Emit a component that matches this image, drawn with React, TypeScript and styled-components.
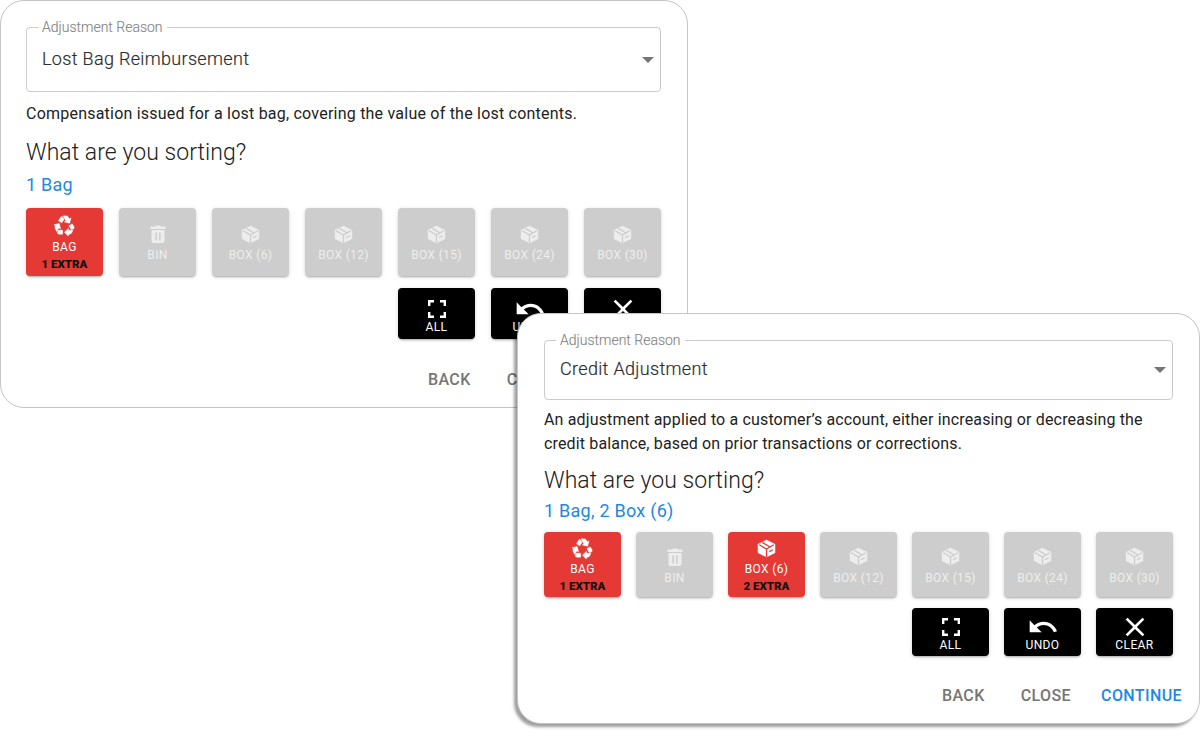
import React from "react";
import styled, { createGlobalStyle } from "styled-components";
import { MdRecycling, MdUndo, MdClose } from "react-icons/md";

const Global = createGlobalStyle`
  html, body { margin: 0; padding: 0; background: #fff; }
  body { font-family: Roboto, "Liberation Sans", sans-serif; width: 1200px; height: 750px; overflow: hidden; }
`;

const Stage = styled.div`
  position: relative;
  width: 1200px;
  height: 750px;
  overflow: hidden;
`;

const Card = styled.div<{ $front?: boolean }>`
  position: absolute;
  box-sizing: border-box;
  background: #fff;
  display: flex;
  flex-direction: column;
  border: 1px solid #c4c4c4;
  ${(p) =>
    p.$front
      ? `left: 517px; top: 313px; width: 683px; height: 411px; border-radius: 24px; padding: 26px 26px 0 26px;
         box-shadow: -3px 3px 3px rgba(0,0,0,.38);`
      : `left: 0; top: 0; width: 688px; height: 408px; border-radius: 24px; padding: 26px 26px 0 25px;`}
`;

const Field = styled.div<{ $h: number }>`
  position: relative;
  box-sizing: border-box;
  height: ${(p) => p.$h}px;
  border: 1px solid #cbcbcb;
  border-radius: 4px;
  display: flex;
  align-items: center;
  padding: 0 15px 3px;
  flex: none;
`;

const FieldLabel = styled.span`
  position: absolute;
  left: 11px;
  top: -9px;
  padding: 0 4px;
  background: #fff;
  font-size: 14px;
  line-height: 16px;
  color: #858585;
  font-weight: 300;
  -webkit-text-stroke: 0.15px #858585;
`;

const FieldValue = styled.span`
  font-size: 18px;
  letter-spacing: 0.33px;
  color: #2e2e2e;
  font-weight: 300;
  -webkit-text-stroke: 0.2px #2e2e2e;
`;

const Caret = styled.span`
  position: absolute;
  right: 6px;
  top: 50%;
  margin-top: -3px;
  width: 0;
  height: 0;
  border-left: 6px solid transparent;
  border-right: 6px solid transparent;
  border-top: 6px solid #757575;
`;

const Description = styled.p<{ $mt: number; $ls: number }>`
  margin: ${(p) => p.$mt}px 0 0;
  font-size: 16px;
  line-height: 24px;
  letter-spacing: ${(p) => p.$ls}px;
  color: #222;
`;

const Heading = styled.h2<{ $mt: number }>`
  margin: ${(p) => p.$mt}px 0 0;
  font-size: 23px;
  line-height: 30px;
  font-weight: 300;
  letter-spacing: 0.05px;
  color: #222;
`;

const Summary = styled.div<{ $mt: number }>`
  margin-top: ${(p) => p.$mt}px;
  font-size: 18px;
  line-height: 24px;
  letter-spacing: 0.25px;
  color: #1e88e5;
`;

const Row = styled.div<{ $mt: number; $gap: number }>`
  display: flex;
  justify-content: flex-end;
  gap: ${(p) => p.$gap}px;
  margin-top: ${(p) => p.$mt}px;
  flex: none;
`;

const Tile = styled.div<{ $kind: "on" | "off" }>`
  box-sizing: border-box;
  width: 77px;
  flex: none;
  border-radius: 4px;
  display: flex;
  flex-direction: column;
  align-items: center;
  justify-content: center;
  padding-top: 2px;
  font-size: 12px;
  line-height: 15px;
  letter-spacing: 0.35px;
  color: ${(p) => (p.$kind === "off" ? "#ededed" : "#fff")};
  background: ${(p) => (p.$kind === "on" ? "#e53935" : "#cdcdcd")};
  box-shadow: 0 2px 2px -1px rgba(0,0,0,.25), 0 1px 4px rgba(0,0,0,.14);
  --cut: ${(p) => (p.$kind === "on" ? "#e53935" : "#cdcdcd")};
`;

const ToolTile = styled.div<{ $pb: number }>`
  box-sizing: border-box;
  width: 77px;
  flex: none;
  border-radius: 4px;
  display: flex;
  flex-direction: column;
  align-items: center;
  justify-content: flex-end;
  padding-bottom: ${(p) => p.$pb}px;
  font-size: 12px;
  line-height: 15px;
  letter-spacing: 0.4px;
  color: #fff;
  background: #000;
  box-shadow: 0 2px 2px -1px rgba(0,0,0,.25), 0 1px 4px rgba(0,0,0,.14);
`;

const Glyph = styled.span`
  display: flex;
  align-items: center;
  justify-content: center;
  height: 22px;
  font-size: 23px;
  margin-bottom: 3px;
  & path:not([fill="none"]):not([d^="M0 0"]) {
    stroke: currentColor;
    stroke-width: 0.6;
  }
`;

const ToolGlyph = styled.span<{ $size: number }>`
  display: flex;
  align-items: center;
  justify-content: center;
  height: 22px;
  font-size: ${(p) => p.$size}px;
`;

const Extra = styled.span`
  font-size: 11.5px;
  font-weight: 900;
  color: #111;
  line-height: 15px;
  letter-spacing: 0;
  margin-top: 2px;
`;

const Actions = styled.div<{ $mt: number; $mr: number }>`
  display: flex;
  justify-content: flex-end;
  gap: 30px;
  margin-top: ${(p) => p.$mt}px;
  margin-right: ${(p) => p.$mr}px;
`;

const Action = styled.span<{ $primary?: boolean }>`
  font-size: 16px;
  line-height: 20px;
  font-weight: 500;
  letter-spacing: 0.4px;
  color: ${(p) => (p.$primary ? "#1e88e5" : "#757575")};
  &:first-child { margin-right: 6px; }
`;

const BoxIcon = () => (
  <svg width="21" height="19" viewBox="0 0 20 18" aria-hidden="true">
    <path
      fill="currentColor"
      stroke="currentColor"
      strokeWidth="1.5"
      strokeLinejoin="round"
      d="M10 1 L18 5 V13 L10 17 L2 13 V5 Z"
    />
    <path
      d="M3 5.5 L10 9.5 L17 5.5 M10 9.5 V17 M6 3.2 L13.4 7.6 M12.6 12 L16 10.2"
      fill="none"
      stroke="var(--cut)"
      strokeWidth="1.2"
      style={{ strokeWidth: 1.2, stroke: "var(--cut)" }}
    />
  </svg>
);

const BinIcon = () => (
  <svg width="20" height="20" viewBox="0 0 20 20" aria-hidden="true">
    <path fill="currentColor" style={{ strokeWidth: 0 }} d="M2.5 2.5 H7 L8 1.5 H12 L13 2.5 H17.5 V5 H2.5 Z" />
    <path fill="currentColor" style={{ strokeWidth: 0 }} fillRule="evenodd" d="M3.5 6 H16.5 V17 A2 2 0 0 1 14.5 19 H5.5 A2 2 0 0 1 3.5 17 Z M7.4 8.5 V16.5 H8.9 V8.5 Z M11.1 8.5 V16.5 H12.6 V8.5 Z" />
  </svg>
);

const SelectAllIcon = () => (
  <svg width="18" height="18" viewBox="0 0 18 18" aria-hidden="true">
    <path
      d="M1.2 6 V1.2 H6 M12 1.2 H16.8 V6 M16.8 12 V16.8 H12 M6 16.8 H1.2 V12"
      fill="none"
      stroke="currentColor"
      strokeWidth="2.4"
    />
  </svg>
);

const labels = [
  ["BAG", "bag"],
  ["BIN", "bin"],
  ["BOX (6)", "box"],
  ["BOX (12)", "box"],
  ["BOX (15)", "box"],
  ["BOX (24)", "box"],
  ["BOX (30)", "box"],
] as const;

const Panel = ({
  front,
  reason,
  desc,
  summary,
  active,
}: {
  front?: boolean;
  reason: string;
  desc: React.ReactNode;
  summary: string;
  active: Record<string, string>;
}) => {
  const h = front ? 65 : 68;
  const toolH = h - 17;
  const gap = front ? 15 : 16;
  const pb = front ? 3 : 4;
  return (
    <Card $front={front}>
      <Field $h={front ? 60 : 65}>
        <FieldLabel>Adjustment Reason</FieldLabel>
        <FieldValue>{reason}</FieldValue>
        <Caret />
      </Field>
      <Description $mt={front ? 8 : 10} $ls={front ? 0.15 : 0.22}>{desc}</Description>
      <Heading $mt={front ? 10 : 12}>What are you sorting?</Heading>
      <Summary $mt={front ? 3 : 5}>{summary}</Summary>
      <Row $mt={front ? 9 : 11} $gap={gap}>
        {labels.map(([label, icon]) => {
          const extra = active[label];
          return (
            <Tile key={label} $kind={extra ? "on" : "off"} style={{ height: h }}>
              <Glyph>
                {icon === "bag" && <MdRecycling />}
                {icon === "bin" && <BinIcon />}
                {icon === "box" && <BoxIcon />}
              </Glyph>
              {label}
              {extra && <Extra>{extra}</Extra>}
            </Tile>
          );
        })}
      </Row>
      <Row $mt={front ? 11 : 12} $gap={gap}>
        <ToolTile $pb={pb} style={{ height: toolH }}><ToolGlyph $size={18}><SelectAllIcon /></ToolGlyph>ALL</ToolTile>
        <ToolTile $pb={pb} style={{ height: toolH }}><ToolGlyph $size={32}><MdUndo /></ToolGlyph>UNDO</ToolTile>
        <ToolTile $pb={pb} style={{ height: toolH }}><ToolGlyph $size={32}><MdClose /></ToolGlyph>CLEAR</ToolTile>
      </Row>
      <Actions $mt={front ? 30 : 31} $mr={front ? -9 : -7}>
        <Action>BACK</Action>
        <Action>CLOSE</Action>
        <Action $primary>CONTINUE</Action>
      </Actions>
    </Card>
  );
};

export default function App() {
  return (
    <Stage>
      <Global />
      <Panel
        reason="Lost Bag Reimbursement"
        desc="Compensation issued for a lost bag, covering the value of the lost contents."
        summary="1 Bag"
        active={{ BAG: "1 EXTRA" }}
      />
      <Panel
        front
        reason="Credit Adjustment"
        desc={<>An adjustment applied to a customer’s account, either increasing or decreasing the<br />credit balance, based on prior transactions or corrections.</>}
        summary="1 Bag, 2 Box (6)"
        active={{ BAG: "1 EXTRA", "BOX (6)": "2 EXTRA" }}
      />
    </Stage>
  );
}
